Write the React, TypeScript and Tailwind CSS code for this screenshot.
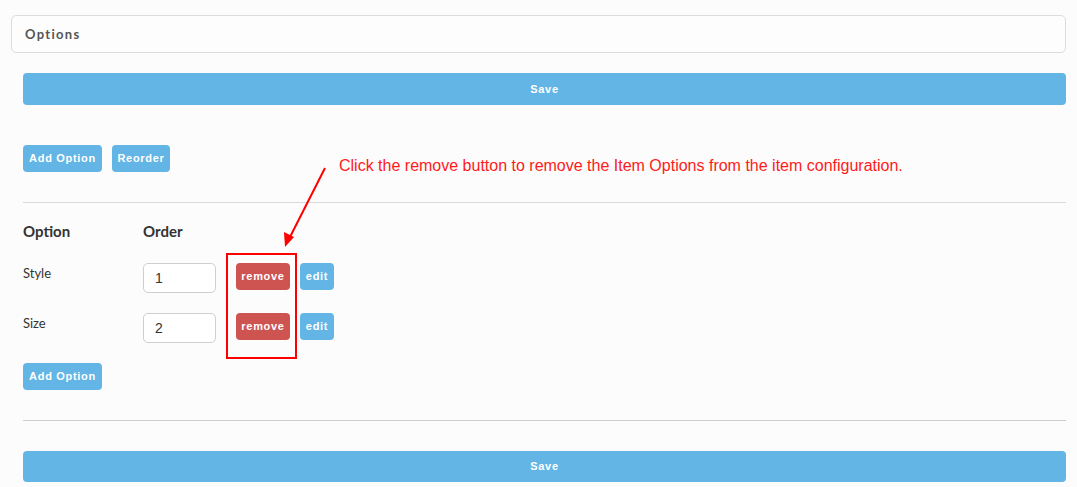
import React from 'react';

const btn =
  "h-[27px] rounded-[4px] text-white text-[11px] font-bold tracking-[0.7px] flex items-center justify-center font-['Liberation_Sans',Arial,sans-serif]";

const rows = [
  { label: 'Style', order: '1' },
  { label: 'Size', order: '2' },
];

export default function App() {
  return (
    <div className="relative w-full h-[487px] bg-[#fcfcfc] pt-[15px] pl-[11px] pr-[11px] overflow-hidden font-['Lato',sans-serif]">
      {/* panel heading */}
      <div className="h-[38px] border border-[#dcdcdc] rounded-[5px] bg-[#fdfdfd] flex items-center pl-[13px] pt-[1px]">
        <span className="text-[13px] font-bold tracking-[1.3px] text-[#555]">Options</span>
      </div>

      <div className="ml-[12px]">
        <button className={`${btn} w-full h-[32px] mt-[20px] bg-[#62b5e5]`}>Save</button>

        <div className="flex gap-[10px] mt-[40px]">
          <button className={`${btn} w-[79px] bg-[#62b5e5]`}>Add Option</button>
          <button className={`${btn} w-[58px] bg-[#62b5e5]`}>Reorder</button>
        </div>

        <div className="mt-[30px] border-t border-[#d9d9d9]" />

        <div className="flex pt-[18px] text-[15px] leading-[20px] font-bold text-[#333]">
          <div className="w-[120px]">Option</div>
          <div>Order</div>
        </div>

        {rows.map((r, i) => (
          <div key={r.label} className={`flex h-[30px] ${i === 0 ? 'mt-[22px]' : 'mt-[20px]'}`}>
            <div className="w-[120px] text-[13px] leading-[20px] text-[#333]">{r.label}</div>
            <input
              readOnly
              value={r.order}
              className="w-[73px] h-[30px] border border-[#cfcfcf] rounded-[5px] bg-white pl-[11px] text-[14px] text-[#333] font-['Liberation_Sans',Arial,sans-serif] outline-none"
            />
            <button className={`${btn} w-[54px] ml-[20px] bg-[#cd5450]`}>remove</button>
            <button className={`${btn} w-[34px] ml-[10px] bg-[#62b5e5]`}>edit</button>
          </div>
        ))}

        <button className={`${btn} w-[79px] mt-[20px] bg-[#62b5e5]`}>Add Option</button>

        <div className="mt-[30px] border-t border-[#cccccc]" />

        <button className={`${btn} w-full h-[31px] mt-[30px] bg-[#62b5e5]`}>Save</button>
      </div>

      {/* annotation overlay */}
      <div className="absolute left-[339px] top-[156px] text-[16px] leading-[20px] text-[#ff1a1a] font-['Liberation_Sans',Arial,sans-serif] whitespace-nowrap">
        Click the remove button to remove the Item Options from the item configuration.
      </div>
      <svg className="absolute left-0 top-0" width="1077" height="487" style={{ pointerEvents: 'none' }}>
        <line x1="325" y1="168" x2="290" y2="237" stroke="#ff0000" strokeWidth="2" />
        <polygon points="285,247 284,232 294,237" fill="#ff0000" />
      </svg>
      <div className="absolute left-[226px] top-[253px] w-[71px] h-[106px] border-2 border-[#ff0000]" />
    </div>
  );
}
